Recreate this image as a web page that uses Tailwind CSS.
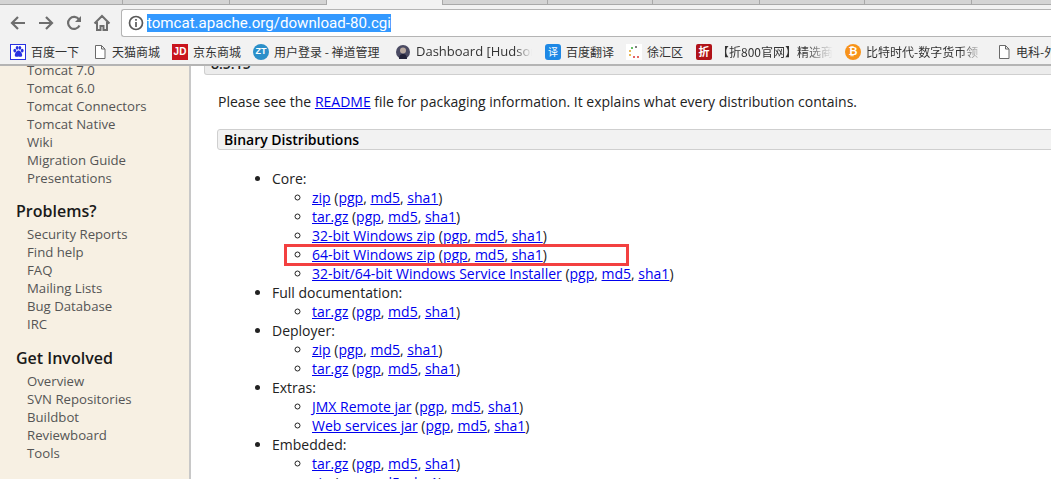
<!DOCTYPE html>
<html lang="en">
<head>
    <meta charset="UTF-8">
    <title>Apache Tomcat - Download</title>
    <script src="https://cdn.jsdelivr.net/npm/@tailwindcss/browser@4"></script>
</head>
<body class="relative w-[1051px] h-[479px] overflow-hidden bg-white font-['Open_Sans','Noto_Sans_CJK_SC',sans-serif] text-[14px]">

    <!-- Tab strip -->
    <div class="h-[5px] bg-[#f2f2f2] flex">
        <div class="w-[123px] h-[5px] bg-[#d4d4d4] border-b border-r border-[#a9a9a9]"></div>
        <div class="w-[107px] h-[5px] bg-[#d4d4d4] border-b border-r border-[#a9a9a9]"></div>
        <div class="w-[97px] h-[5px] bg-[#d4d4d4] border-b border-r border-[#a9a9a9]"></div>
        <div class="w-[115px] h-[5px] bg-[#f2f2f2]"></div>
        <div class="w-[106px] h-[5px] bg-[#d4d4d4] border-b border-r border-l border-[#a9a9a9]"></div>
        <div class="w-[105px] h-[5px] bg-[#d4d4d4] border-b border-r border-[#a9a9a9]"></div>
        <div class="w-[107px] h-[5px] bg-[#d4d4d4] border-b border-r border-[#a9a9a9]"></div>
        <div class="w-[105px] h-[5px] bg-[#d4d4d4] border-b border-r border-[#a9a9a9]"></div>
        <div class="w-[107px] h-[5px] bg-[#d4d4d4] border-b border-r border-[#a9a9a9]"></div>
        <div class="flex-1 h-[5px] bg-[#d4d4d4] border-b border-[#a9a9a9]"></div>
    </div>

    <!-- Toolbar -->
    <div class="h-[33px] bg-[#f2f2f2] flex items-center pl-[9px] pt-[3px]">
        <svg class="w-[18px] h-[18px] mr-[10px]" viewBox="0 0 18 18" fill="none" stroke="#6e6e6e" stroke-width="2.200"><path d="M16 9H3M9 3L3 9l6 6"/></svg>
        <svg class="w-[18px] h-[18px] mr-[10px]" viewBox="0 0 18 18" fill="none" stroke="#6e6e6e" stroke-width="2.200"><path d="M2 9h13M9 3l6 6-6 6"/></svg>
        <svg class="w-[18px] h-[18px] mr-[10px]" viewBox="0 0 18 18" fill="none" stroke="#6e6e6e" stroke-width="2.200"><path d="M14.500 11.500A6 6 0 1 1 14 5.500"/><path d="M16 2v6h-6z" fill="#6e6e6e" stroke="none"/></svg>
        <svg class="w-[18px] h-[18px] mr-[10px]" viewBox="0 0 18 18" fill="none" stroke="#6e6e6e" stroke-width="2"><path d="M1.500 9.500L9 2l7.500 7.500M4 8v8h3.500v-4h3v4H14V8"/></svg>
        <div class="w-[931px] h-[28px] bg-white border border-[#b4b4b4] rounded-l-[3px] border-r-0 flex items-center pl-[5px]">
            <svg class="w-[16px] h-[16px] mr-[3px] ml-[1px]" viewBox="0 0 16 16" fill="none" stroke="#5a5a5a" stroke-width="1.700"><circle cx="8" cy="8" r="6.500"/><path d="M8 7v5M8 4v1.800"/></svg>
            <span class="bg-[#3399ff] text-white text-[15.100px] leading-[18px] font-['Roboto','Open_Sans',sans-serif]">tomcat.apache.org/download-80.cgi</span>
        </div>
    </div>

    <!-- Bookmarks bar -->
    <div class="h-[28px] bg-[#f2f2f2] border-b-2 border-[#b4b4b4] flex items-center text-[12px] text-[#333] whitespace-nowrap font-['Noto_Sans_CJK_SC','Open_Sans',sans-serif] pt-[1px]">
        <div class="flex items-center ml-[10px] w-[83px] shrink-0">
            <span class="w-[16px] h-[16px] bg-white border border-[#2932e1] mr-[5px] flex items-center justify-center">
                <svg class="w-[13px] h-[13px]" viewBox="0 0 14 14" fill="#2932e1"><ellipse cx="3" cy="6" rx="1.500" ry="2"/><ellipse cx="5.500" cy="3" rx="1.500" ry="2"/><ellipse cx="8.500" cy="3" rx="1.500" ry="2"/><ellipse cx="11" cy="6" rx="1.500" ry="2"/><path d="M7 6c2 0 4 3 4 5s-2 2-4 1.500C5 13 3 13 3 11s2-5 4-5z"/></svg>
            </span>百度一下
        </div>
        <div class="flex items-center w-[79px] shrink-0">
            <svg class="w-[14px] h-[16px] mr-[5px]" viewBox="0 0 14 16" fill="white" stroke="#6a6a6a"><path d="M2.500 1.500h6l3.500 3.500v9.500h-9.500zM8.500 1.500v3.500h3.500"/></svg>天猫商城
        </div>
        <div class="flex items-center w-[81px] shrink-0">
            <span class="w-[16px] h-[16px] bg-[#c9151e] text-white text-[10px] font-bold flex items-center justify-center mr-[5px] font-['Liberation_Sans',sans-serif]">JD</span>京东商城
        </div>
        <div class="flex items-center w-[143px] shrink-0">
            <span class="w-[16px] h-[16px] rounded-full bg-[#2b8fc9] text-white text-[9px] font-bold flex items-center justify-center mr-[5px] font-['Liberation_Sans',sans-serif]">ZT</span>用户登录 - 禅道管理
        </div>
        <div class="flex items-center w-[149px] shrink-0">
            <svg class="w-[14px] h-[14px] mr-[6px] shrink-0" viewBox="0 0 14 14"><circle cx="7" cy="7" r="7" fill="#4b4b63"/><circle cx="7" cy="5.500" r="3" fill="#b9a9a0"/><path d="M3 14c0-4 2-5 4-5s4 1 4 5z" fill="#23233a"/></svg>
            <span class="w-[116px] overflow-hidden font-['Open_Sans',sans-serif] text-[13px] [mask-image:linear-gradient(to_right,black_85%,transparent)]">Dashboard [Hudson]</span>
        </div>
        <div class="flex items-center w-[81px] shrink-0">
            <span class="w-[16px] h-[16px] rounded-[3px] bg-[#1e88e5] text-white text-[10px] flex items-center justify-center mr-[5px]">译</span>百度翻译
        </div>
        <div class="flex items-center w-[70px] shrink-0">
            <span class="w-[16px] h-[16px] bg-white mr-[5px] flex items-center justify-center">
                <svg class="w-[14px] h-[14px]" viewBox="0 0 14 14"><circle cx="9" cy="2" r="1" fill="#555"/><circle cx="5" cy="3" r="1" fill="#3a3"/><circle cx="3" cy="6" r="1" fill="#e0a020"/><circle cx="3" cy="10" r="1" fill="#e0a020"/><circle cx="7" cy="12" r="1" fill="#d33"/><circle cx="11" cy="12" r="1" fill="#d33"/></svg>
            </span>徐汇区
        </div>
        <div class="flex items-center w-[149px] shrink-0">
            <span class="w-[16px] h-[16px] bg-[#b01218] rounded-[2px] text-white text-[11px] font-bold flex items-center justify-center mr-[5px] shrink-0">折</span><span class="w-[116px] overflow-hidden [mask-image:linear-gradient(to_right,black_75%,transparent)]">【折800官网】精选商</span>
        </div>
        <div class="flex items-center w-[152px] shrink-0">
            <span class="w-[16px] h-[16px] rounded-full bg-[#f7931a] text-white text-[11px] font-bold flex items-center justify-center mr-[5px] shrink-0 font-['Liberation_Sans',sans-serif]">₿</span><span class="w-[118px] overflow-hidden [mask-image:linear-gradient(to_right,black_80%,transparent)]">比特时代-数字货币领</span>
        </div>
        <div class="flex items-center shrink-0">
            <svg class="w-[14px] h-[16px] mr-[5px]" viewBox="0 0 14 16" fill="white" stroke="#6a6a6a"><path d="M2.500 1.500h6l3.500 3.500v9.500h-9.500zM8.500 1.500v3.500h3.500"/></svg>电科-外
        </div>
    </div>

    <!-- Page -->
    <div class="flex h-[413px] overflow-hidden">

        <!-- Sidebar -->
        <aside class="w-[191px] shrink-0 bg-[#f7f0e3] border-r-2 border-[#c8c8c8] text-[#555] text-[13.200px] leading-[18px] pl-[27px]">
            <ul class="-mt-[5px]">
                <li>Tomcat 7.0</li>
                <li>Tomcat 6.0</li>
                <li>Tomcat Connectors</li>
                <li>Tomcat Native</li>
                <li>Wiki</li>
                <li>Migration Guide</li>
                <li>Presentations</li>
            </ul>
            <h3 class="-ml-[11px] mt-[14px] mb-[4px] text-[16px] leading-[20px] font-semibold text-[#1a1a1a]">Problems?</h3>
            <ul>
                <li>Security Reports</li>
                <li>Find help</li>
                <li>FAQ</li>
                <li>Mailing Lists</li>
                <li>Bug Database</li>
                <li>IRC</li>
            </ul>
            <h3 class="-ml-[11px] mt-[15px] mb-[4px] text-[16px] leading-[20px] font-semibold text-[#1a1a1a]">Get Involved</h3>
            <ul>
                <li>Overview</li>
                <li>SVN Repositories</li>
                <li>Buildbot</li>
                <li>Reviewboard</li>
                <li>Tools</li>
            </ul>
        </aside>

        <!-- Main content -->
        <main class="flex-1 text-[14px] leading-[19px] text-[#222] pl-[27px]">
            <div class="-ml-[14px] w-[860px] h-[9px] bg-[#ececec] border border-t-0 border-[#cfcfcf] rounded-b-[3px] overflow-hidden">
                <div class="-mt-[12px] pl-[6px] font-semibold">8.5.15</div>
            </div>
            <p class="mt-[17px]">Please see the <a class="text-[#0000ee] underline">README</a> file for packaging information. It explains what every distribution contains.</p>
            <div class="-ml-[1px] mt-[18px] w-[840px] h-[21px] bg-[#f2f2f2] border border-[#cfcfcf] rounded-[3px] pl-[6px] font-semibold text-black">Binary Distributions</div>

            <ul class="mt-[19px] ml-[28px] list-disc pl-[26px]">
                <li>Core:
                    <ul class="list-[circle] pl-[40px]">
                        <li><a class="text-[#0000ee] underline">zip</a> (<a class="text-[#0000ee] underline">pgp</a>, <a class="text-[#0000ee] underline">md5</a>, <a class="text-[#0000ee] underline">sha1</a>)</li>
                        <li><a class="text-[#0000ee] underline">tar.gz</a> (<a class="text-[#0000ee] underline">pgp</a>, <a class="text-[#0000ee] underline">md5</a>, <a class="text-[#0000ee] underline">sha1</a>)</li>
                        <li><a class="text-[#0000ee] underline">32-bit Windows zip</a> (<a class="text-[#0000ee] underline">pgp</a>, <a class="text-[#0000ee] underline">md5</a>, <a class="text-[#0000ee] underline">sha1</a>)</li>
                        <li><a class="text-[#0000ee] underline">64-bit Windows zip</a> (<a class="text-[#0000ee] underline">pgp</a>, <a class="text-[#0000ee] underline">md5</a>, <a class="text-[#0000ee] underline">sha1</a>)</li>
                        <li><a class="text-[#0000ee] underline">32-bit/64-bit Windows Service Installer</a> (<a class="text-[#0000ee] underline">pgp</a>, <a class="text-[#0000ee] underline">md5</a>, <a class="text-[#0000ee] underline">sha1</a>)</li>
                    </ul>
                </li>
                <li>Full documentation:
                    <ul class="list-[circle] pl-[40px]">
                        <li><a class="text-[#0000ee] underline">tar.gz</a> (<a class="text-[#0000ee] underline">pgp</a>, <a class="text-[#0000ee] underline">md5</a>, <a class="text-[#0000ee] underline">sha1</a>)</li>
                    </ul>
                </li>
                <li>Deployer:
                    <ul class="list-[circle] pl-[40px]">
                        <li><a class="text-[#0000ee] underline">zip</a> (<a class="text-[#0000ee] underline">pgp</a>, <a class="text-[#0000ee] underline">md5</a>, <a class="text-[#0000ee] underline">sha1</a>)</li>
                        <li><a class="text-[#0000ee] underline">tar.gz</a> (<a class="text-[#0000ee] underline">pgp</a>, <a class="text-[#0000ee] underline">md5</a>, <a class="text-[#0000ee] underline">sha1</a>)</li>
                    </ul>
                </li>
                <li>Extras:
                    <ul class="list-[circle] pl-[40px]">
                        <li><a class="text-[#0000ee] underline">JMX Remote jar</a> (<a class="text-[#0000ee] underline">pgp</a>, <a class="text-[#0000ee] underline">md5</a>, <a class="text-[#0000ee] underline">sha1</a>)</li>
                        <li><a class="text-[#0000ee] underline">Web services jar</a> (<a class="text-[#0000ee] underline">pgp</a>, <a class="text-[#0000ee] underline">md5</a>, <a class="text-[#0000ee] underline">sha1</a>)</li>
                    </ul>
                </li>
                <li>Embedded:
                    <ul class="list-[circle] pl-[40px]">
                        <li><a class="text-[#0000ee] underline">tar.gz</a> (<a class="text-[#0000ee] underline">pgp</a>, <a class="text-[#0000ee] underline">md5</a>, <a class="text-[#0000ee] underline">sha1</a>)</li>
                        <li><a class="text-[#0000ee] underline">zip</a> (<a class="text-[#0000ee] underline">pgp</a>, <a class="text-[#0000ee] underline">md5</a>, <a class="text-[#0000ee] underline">sha1</a>)</li>
                    </ul>
                </li>
            </ul>
        </main>
    </div>

    <!-- Red annotation box drawn over the page -->
    <div class="absolute left-[284px] top-[244px] w-[345px] h-[22px] border-[3px] border-[#f34040]"></div>
</body>
</html>
